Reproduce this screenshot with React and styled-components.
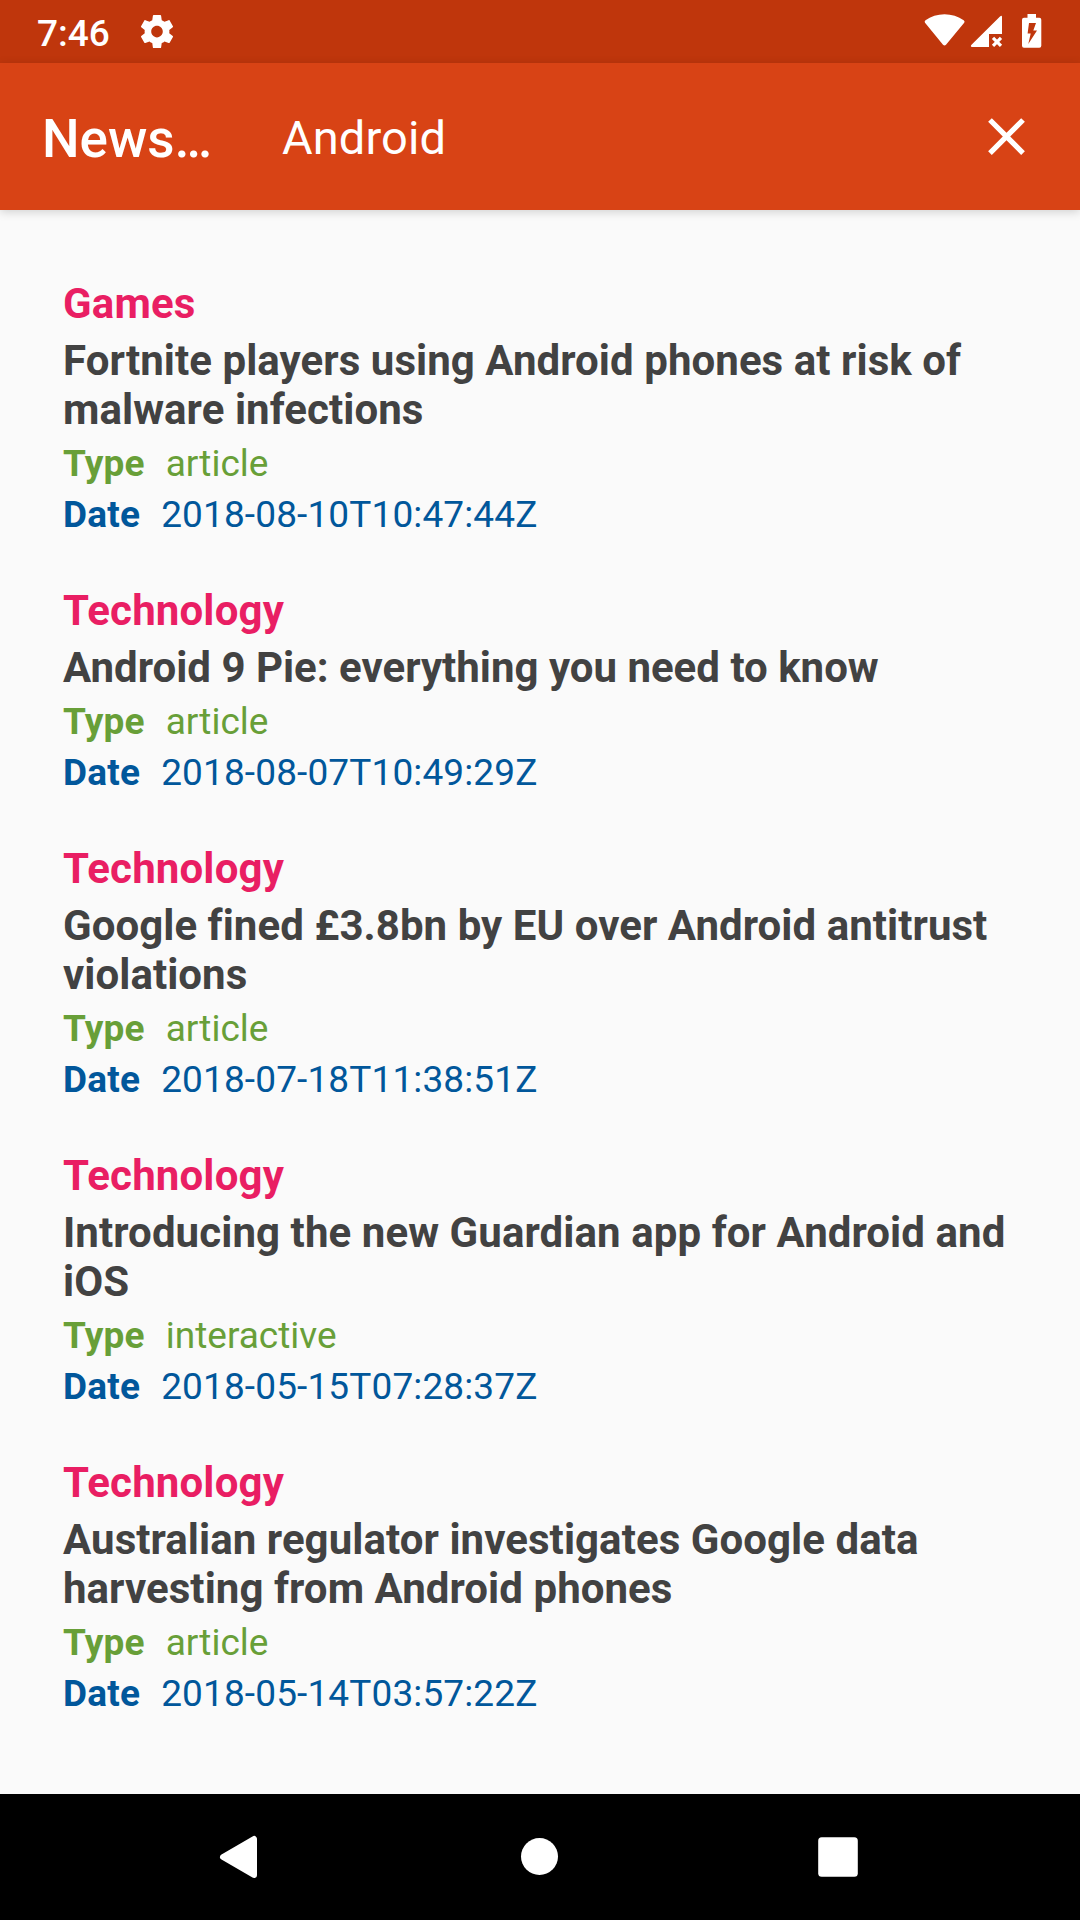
import React from "react";
import styled, { createGlobalStyle } from "styled-components";

const GlobalStyle = createGlobalStyle`
  *, *::before, *::after { box-sizing: border-box; }
  body {
    margin: 0;
    background: #fafafa;
    font-family: Roboto, "Noto Sans", sans-serif;
    -webkit-font-smoothing: antialiased;
  }
`;

const Screen = styled.div`
  display: flex;
  flex-direction: column;
  width: 1080px;
  height: 1920px;
  overflow: hidden;
  background: #fafafa;
`;

const StatusBar = styled.header`
  display: flex;
  flex: none;
  align-items: flex-start;
  height: 63px;
  padding: 0 36px 0 37px;
  background: #bf360c;
  color: #fff;
`;

const Clock = styled.time`
  width: 100px;
  padding-top: 12px;
  font-size: 37px;
  font-weight: 500;
  line-height: 43px;
`;

const StatusIcon = styled.svg`
  display: block;
  flex: none;
  width: ${(p) => p.$w}px;
  height: 63px;
  fill: #fff;
`;

const StatusTray = styled.div`
  display: flex;
  margin-left: auto;
`;

const Toolbar = styled.div`
  display: flex;
  flex: none;
  align-items: center;
  height: 147px;
  padding: 0 42px;
  background: #d84315;
  color: #fff;
  box-shadow: 0 2px 9px rgba(0, 0, 0, 0.17);
`;

const AppTitle = styled.h1`
  flex: none;
  width: 240px;
  margin: 0;
  padding-top: 4px;
  font-size: 53px;
  font-weight: 500;
  line-height: 62px;
`;

const Query = styled.div`
  flex: 1;
  padding-top: 3px;
  font-size: 47px;
  letter-spacing: 0.1px;
  line-height: 56px;
`;

const CloseButton = styled.button`
  display: flex;
  margin: 0 -31px 0 0;
  padding: 0 31px;
  border: 0;
  background: none;
  svg { width: 63px; height: 63px; fill: #fff; }
`;

const List = styled.main`
  display: flex;
  flex: 1;
  flex-direction: column;
  gap: 50px;
  padding: 69px 63px 0;
`;

const Article = styled.article`
  display: flex;
  flex-direction: column;
`;

const Section = styled.div`
  color: #e91e63;
  font-size: 42px;
  font-weight: 700;
  letter-spacing: 0.15px;
  line-height: 49px;
`;

const Headline = styled.h2`
  margin: 8px 0;
  color: #424242;
  font-size: 42px;
  font-weight: 700;
  letter-spacing: ${(p) => p.$tracking}px;
  line-height: 49px;
`;

const Meta = styled.div`
  display: flex;
  gap: 21px;
  color: ${(p) => p.$color};
  font-size: 37px;
  line-height: 43px;
  & + & { margin-top: 8px; }
`;

const Label = styled.span`
  font-weight: 700;
  letter-spacing: 0.2px;
`;

const Value = styled.span`
  letter-spacing: ${(p) => (p.$numeric ? 0.13 : 0)}px;
`;

const NavBar = styled.nav`
  display: flex;
  flex: none;
  justify-content: center;
  height: 126px;
  background: #000;
`;

const NavKey = styled.svg`
  display: block;
  width: 300px;
  height: 126px;
  fill: #fff;
  stroke: #fff;
  stroke-width: 0;
  stroke-linejoin: round;
`;

const articles = [
  ["Games", "Fortnite players using Android phones at risk of malware infections", "article", "2018-08-10T10:47:44Z", 0.06],
  ["Technology", "Android 9 Pie: everything you need to know", "article", "2018-08-07T10:49:29Z", 0],
  ["Technology", "Google fined £3.8bn by EU over Android antitrust violations", "article", "2018-07-18T11:38:51Z", 0.05],
  ["Technology", "Introducing the new Guardian app for Android and iOS", "interactive", "2018-05-15T07:28:37Z", 0.08],
  ["Technology", "Australian regulator investigates Google data harvesting from Android phones", "article", "2018-05-14T03:57:22Z", 0.06],
];

export default function App() {
  return (
    <Screen>
      <GlobalStyle />
      <StatusBar>
        <Clock>7:46</Clock>
        <StatusIcon $w={40} viewBox="0 0 40 63">
          <g transform="translate(0.2 11.8) scale(1.65)">
            <path d="M19.43 12.98c.04-.32.07-.64.07-.98s-.03-.66-.07-.98l2.11-1.65c.19-.15.24-.42.12-.64l-2-3.46c-.12-.22-.39-.3-.61-.22l-2.49 1c-.52-.4-1.08-.73-1.69-.98l-.38-2.65C14.46 2.18 14.25 2 14 2h-4c-.25 0-.46.18-.49.42l-.38 2.65c-.61.25-1.17.59-1.69.98l-2.49-1c-.23-.09-.49 0-.61.22l-2 3.46c-.13.22-.07.49.12.64l2.11 1.65c-.04.32-.07.65-.07.98s.03.66.07.98l-2.11 1.65c-.19.15-.24.42-.12.64l2 3.46c.12.22.39.3.61.22l2.49-1c.52.4 1.08.73 1.69.98l.38 2.65c.03.24.24.42.49.42h4c.25 0 .46-.18.49-.42l.38-2.65c.61-.25 1.17-.59 1.69-.98l2.49 1c.23.09.49 0 .61-.22l2-3.46c.12-.22.07-.49-.12-.64l-2.11-1.65zM12 15.5c-1.93 0-3.5-1.57-3.5-3.5s1.57-3.5 3.5-3.5 3.5 1.57 3.5 3.5-1.57 3.5-3.5 3.5z" />
          </g>
        </StatusIcon>
        <StatusTray>
          <StatusIcon $w={46} viewBox="922 0 46 63">
            <path d="M925 22.8Q924 21.4 925.5 20.3C936 12.1 953 12.1 963.7 20.3Q965.2 21.4 964.2 22.8L946 44.7Q944.5 46.3 943 44.7Z" />
          </StatusIcon>
          <StatusIcon $w={46} viewBox="968 0 46 63">
            <path d="M1000 16.5Q1002 15 1002 17V34H989V47H972Q970 46.5 971.5 44.8Z" />
            <path d="M993 37.8L1001 45.8M1001 37.8L993 45.8" fill="none" stroke="#fff" strokeWidth="3.2" />
          </StatusIcon>
          <StatusIcon $w={30} viewBox="1014 0 30 63">
            <path fillRule="evenodd" d="M1027.5 14H1036V17.7H1039.3Q1041.3 17.7 1041.3 19.7V45.8Q1041.3 47.8 1039.3 47.8H1024Q1022 47.8 1022 45.8V19.7Q1022 17.7 1024 17.7H1027.5ZM1029 23L1027.6 33.5H1030.7L1028.3 44L1037 30.5H1033.3L1036 23Z" />
          </StatusIcon>
        </StatusTray>
      </StatusBar>
      <Toolbar>
        <AppTitle>News…</AppTitle>
        <Query>Android</Query>
        <CloseButton aria-label="Clear search">
          <svg viewBox="0 0 24 24">
            <path d="M19 6.41L17.59 5 12 10.59 6.41 5 5 6.41 10.59 12 5 17.59 6.41 19 12 13.41 17.59 19 19 17.59 13.41 12z" />
          </svg>
        </CloseButton>
      </Toolbar>
      <List>
        {articles.map(([section, headline, type, date, tracking]) => (
          <Article key={date}>
            <Section>{section}</Section>
            <Headline $tracking={tracking}>{headline}</Headline>
            <Meta $color="#689f38"><Label>Type</Label><Value>{type}</Value></Meta>
            <Meta $color="#01579b"><Label>Date</Label><Value $numeric>{date}</Value></Meta>
          </Article>
        ))}
      </List>
      <NavBar>
        <NavKey viewBox="90 1794 300 126">
          <path d="M223 1857L254 1839V1875Z" strokeWidth="6" />
        </NavKey>
        <NavKey viewBox="390 1794 300 126">
          <circle cx="539.5" cy="1856.5" r="18.5" />
        </NavKey>
        <NavKey viewBox="690 1794 300 126">
          <rect x="818.2" y="1837.2" width="39.6" height="39.6" rx="3.5" />
        </NavKey>
      </NavBar>
    </Screen>
  );
}
